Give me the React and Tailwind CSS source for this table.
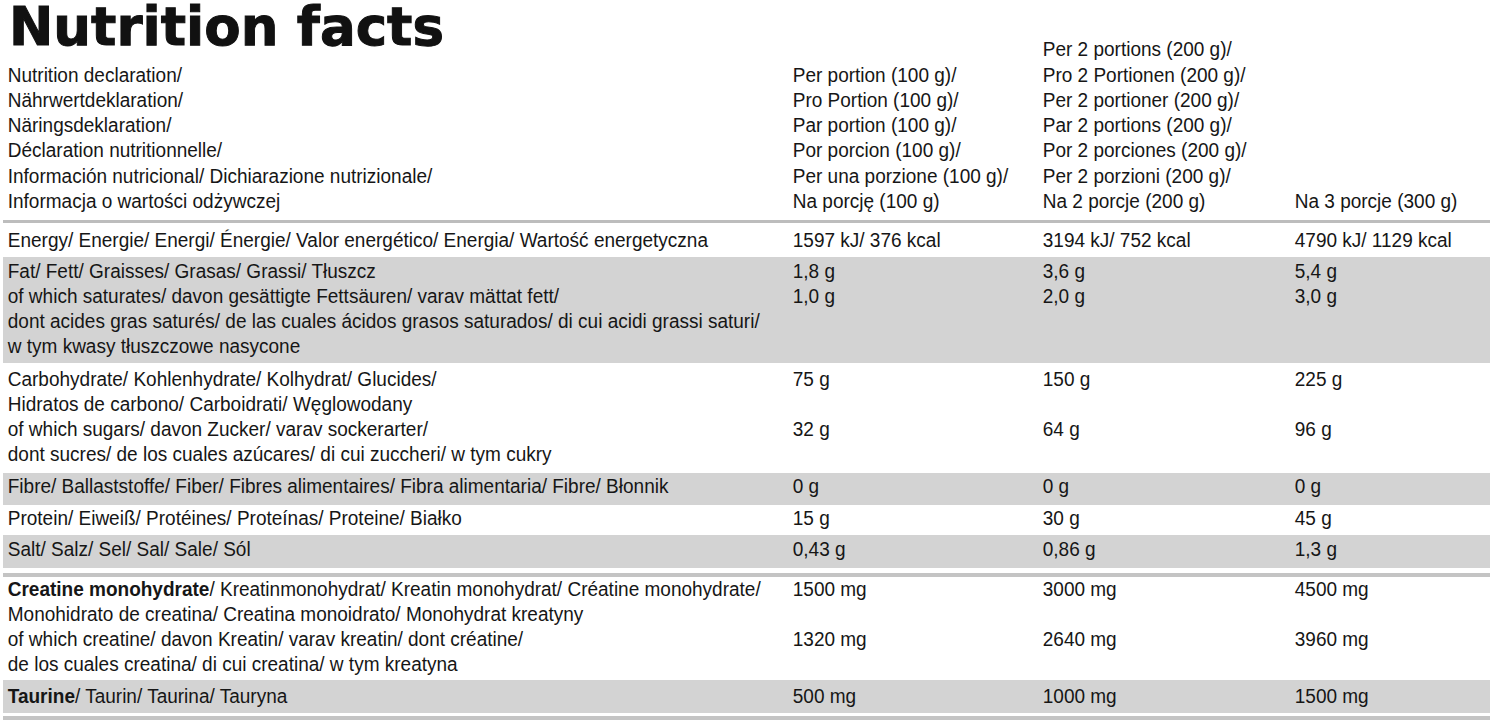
const header = {
  c1: [
    "Nutrition declaration/",
    "Nährwertdeklaration/",
    "Näringsdeklaration/",
    "Déclaration nutritionnelle/",
    "Información nutricional/ Dichiarazione nutrizionale/",
    "Informacja o wartości odżywczej",
  ],
  c2: [
    "Per portion (100 g)/",
    "Pro Portion (100 g)/",
    "Par portion (100 g)/",
    "Por porcion (100 g)/",
    "Per una porzione (100 g)/",
    "Na porcję (100 g)",
  ],
  c3: [
    "Per 2 portions (200 g)/",
    "Pro 2 Portionen (200 g)/",
    "Per 2 portioner (200 g)/",
    "Par 2 portions (200 g)/",
    "Por 2 porciones (200 g)/",
    "Per 2 porzioni (200 g)/",
    "Na 2 porcje (200 g)",
  ],
  c4: ["Na 3 porcje (300 g)"],
};

const rows = [
  {
    gray: false,
    pad: "pt-[5px] pb-[4px]",
    label: [
      "Energy/ Energie/ Energi/ Énergie/ Valor energético/ Energia/ Wartość energetyczna",
    ],
    vals: [["1597 kJ/ 376 kcal"], ["3194 kJ/ 752 kcal"], ["4790 kJ/ 1129 kcal"]],
  },
  {
    gray: true,
    pad: "pt-[2px] pb-[4px]",
    label: [
      "Fat/ Fett/ Graisses/ Grasas/ Grassi/ Tłuszcz",
      "of which saturates/ davon gesättigte Fettsäuren/ varav mättat fett/",
      "dont acides gras saturés/ de las cuales ácidos grasos saturados/ di cui acidi grassi saturi/",
      "w tym kwasy tłuszczowe nasycone",
    ],
    vals: [
      ["1,8 g", "1,0 g"],
      ["3,6 g", "2,0 g"],
      ["5,4 g", "3,0 g"],
    ],
  },
  {
    gray: false,
    pad: "pt-[4px] pb-[6px]",
    label: [
      "Carbohydrate/ Kohlenhydrate/ Kolhydrat/ Glucides/",
      "Hidratos de carbono/ Carboidrati/ Węglowodany",
      "of which sugars/ davon Zucker/ varav sockerarter/",
      "dont sucres/ de los cuales azúcares/ di cui zuccheri/ w tym cukry",
    ],
    vals: [
      ["75 g", "", "32 g"],
      ["150 g", "", "64 g"],
      ["225 g", "", "96 g"],
    ],
  },
  {
    gray: true,
    pad: "pt-[1px] pb-[6px]",
    label: [
      "Fibre/ Ballaststoffe/ Fiber/ Fibres alimentaires/ Fibra alimentaria/ Fibre/ Błonnik",
    ],
    vals: [["0 g"], ["0 g"], ["0 g"]],
  },
  {
    gray: false,
    pad: "pt-[1px] pb-[4px]",
    label: ["Protein/ Eiweiß/ Protéines/ Proteínas/ Proteine/ Białko"],
    vals: [["15 g"], ["30 g"], ["45 g"]],
  },
  {
    gray: true,
    pad: "pt-[2px] pb-[6px]",
    label: ["Salt/ Salz/ Sel/ Sal/ Sale/ Sól"],
    vals: [["0,43 g"], ["0,86 g"], ["1,3 g"]],
  },
];

const rows2 = [
  {
    gray: false,
    pad: "pt-[0px] pb-[3px]",
    label: [
      <>
        <b>Creatine monohydrate</b>/ Kreatinmonohydrat/ Kreatin monohydrat/ Créatine monohydrate/
      </>,
      "Monohidrato de creatina/ Creatina monoidrato/ Monohydrat kreatyny",
      "of which creatine/ davon Kreatin/ varav kreatin/ dont créatine/",
      "de los cuales creatina/ di cui creatina/ w tym kreatyna",
    ],
    vals: [
      ["1500 mg", "", "1320 mg"],
      ["3000 mg", "", "2640 mg"],
      ["4500 mg", "", "3960 mg"],
    ],
  },
  {
    gray: true,
    pad: "pt-[4px] pb-[4px]",
    label: [
      <>
        <b>Taurine</b>/ Taurin/ Taurina/ Tauryna
      </>,
    ],
    vals: [["500 mg"], ["1000 mg"], ["1500 mg"]],
  },
];

const cols = "grid grid-cols-[785px_250px_252px_1fr]";

// condensed look: Liberation Sans squeezed a little horizontally
function Lines({ items }) {
  return (
    <div className="pl-[5px] origin-left scale-x-[0.95]">
      {items.map((t, i) => (
        <div key={i} className="whitespace-nowrap">
          {t === "" ? "\u00a0" : t}
        </div>
      ))}
    </div>
  );
}

function Row({ row }) {
  return (
    <div className={`${cols} ${row.gray ? "bg-[#d3d3d3]" : "bg-white"} ${row.pad}`}>
      <Lines items={row.label} />
      {row.vals.map((v, i) => (
        <Lines key={i} items={v} />
      ))}
    </div>
  );
}

export default function App() {
  return (
    <div className="w-[1500px] h-[723px] bg-white text-[#161616] text-[20px] leading-[25px] overflow-hidden font-['Liberation_Sans',Arial,sans-serif]">
      <div className="px-[3px] w-[1493px]">
        <div className={`${cols} items-end pb-[5.5px] leading-[25.3px]`}>
          <div>
            <h1 className="pl-[6px] -mt-[3px] mb-[5.5px] text-[53px] leading-[60px] font-bold text-[#111] font-['DejaVu_Sans',sans-serif] [-webkit-text-stroke:1px_#111]">
              Nutrition facts
            </h1>
            <Lines items={header.c1} />
          </div>
          <Lines items={header.c2} />
          <Lines items={header.c3} />
          <Lines items={header.c4} />
        </div>
        <div className="h-[3px] bg-[#bdbdbd]" />
        {rows.map((r, i) => (
          <Row key={i} row={r} />
        ))}
        <div className="h-[5px] bg-white" />
        <div className="h-[4px] bg-[#c4c4c4]" />
        {rows2.map((r, i) => (
          <Row key={i} row={r} />
        ))}
        <div className="h-[3px] bg-white" />
        <div className="h-[4px] bg-[#c4c4c4]" />
      </div>
    </div>
  );
}
